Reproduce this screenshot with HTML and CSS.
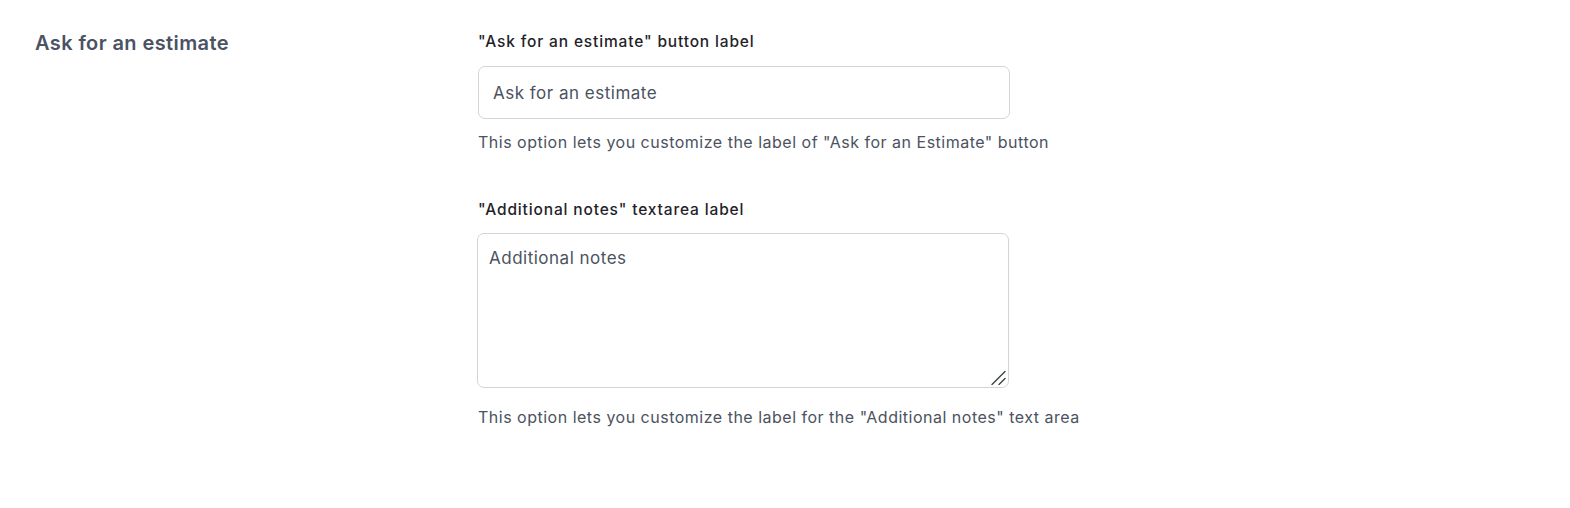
FILE: index.html
```html
<!DOCTYPE html>
<html lang="en">
<head>
<meta charset="utf-8">
<title>Ask for an estimate</title>
<link rel="stylesheet" href="styles.css">
</head>
<body>
<section class="settings-row">
  <h2 class="section-title">Ask for an estimate</h2>
  <div class="fields">
    <div class="field">
      <label class="field-label" for="btn-label">"Ask for an estimate" button label</label>
      <input class="text-input" id="btn-label" type="text" value="Ask for an estimate">
      <p class="help">This option lets you customize the label of "Ask for an Estimate" button</p>
    </div>
    <div class="field field-notes">
      <label class="field-label" for="notes-label">"Additional notes" textarea label</label>
      <div class="area-wrap">
        <textarea class="text-area" id="notes-label">Additional notes</textarea>
        <svg class="grip" width="16" height="16" viewBox="0 0 16 16" aria-hidden="true">
          <path d="M2 15.5 L15 2.5" stroke="#3f4246" stroke-width="1.4" stroke-linecap="round" fill="none"/>
          <path d="M9 15.5 L15 9.5" stroke="#3f4246" stroke-width="1.4" stroke-linecap="round" fill="none"/>
        </svg>
      </div>
      <p class="help help-notes">This option lets you customize the label for the "Additional notes" text area</p>
    </div>
  </div>
</section>
</body>
</html>
```
FILE: styles.css
```css
html, body {
  margin: 0;
  padding: 0;
  background: #ffffff;
}
body {
  font-family: Inter, "Noto Sans", "Liberation Sans", sans-serif;
  color: #1f2937;
}
.settings-row {
  display: flex;
  padding: 31px 0 0 35px;
}
.section-title {
  width: 443px;
  flex: none;
  margin: 0;
  font-size: 20px;
  line-height: 24px;
  font-weight: 600;
  letter-spacing: 0.4px;
  color: #4a5263;
}
.fields {
  width: 532px;
  display: flex;
  flex-direction: column;
  gap: 46px;
}
.field {
  display: flex;
  flex-direction: column;
}
.field-label {
  font-size: 15.5px;
  line-height: 22px;
  font-weight: 500;
  letter-spacing: 0.85px;
  color: #1f2329;
  margin-bottom: 13px;
}
.field-notes .field-label {
  margin-bottom: 12px;
}
.text-input, .text-area {
  box-sizing: border-box;
  width: 532px;
  border: 1px solid #d2d5da;
  border-radius: 7px;
  font-family: inherit;
  font-size: 17px;
  letter-spacing: 0.5px;
  color: #4b5260;
  background: #fff;
  margin: 0;
  outline: none;
}
.text-input {
  height: 53px;
  padding: 0 14px;
}
.area-wrap {
  position: relative;
  width: 532px;
  height: 155px;
  margin-left: -1px;
}
.text-area {
  display: block;
  height: 155px;
  padding: 12px 11px;
  line-height: 24px;
  resize: none;
}
.grip {
  position: absolute;
  right: 3px;
  bottom: 3px;
}
.help {
  margin: 12px 0 0;
  font-size: 16px;
  line-height: 22px;
  letter-spacing: 0.5px;
  color: #4b5260;
  white-space: nowrap;
}
.help-notes {
  margin-top: 18px;
}
```
